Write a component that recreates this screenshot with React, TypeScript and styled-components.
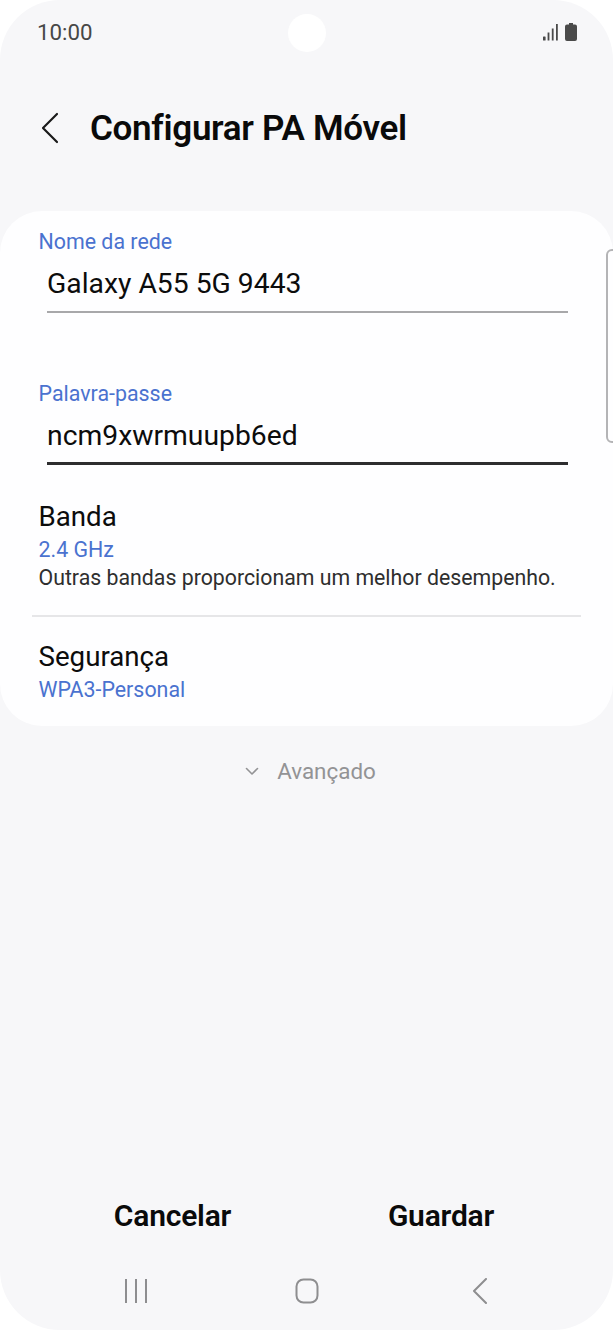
import React from "react";
import styled, { createGlobalStyle } from "styled-components";

const Global = createGlobalStyle`
  html, body { margin: 0; padding: 0; background: #fff; }
  * { box-sizing: border-box; }
  body { font-family: Roboto, Inter, "Liberation Sans", sans-serif; }
`;

const Phone = styled.div`
  position: relative;
  width: 613px;
  height: 1330px;
  background: #f7f7f9;
  border-radius: 60px;
  overflow: hidden;
  display: flex;
  flex-direction: column;
`;

const StatusBar = styled.div`
  height: 64px;
  padding: 0 36px 0 37px;
  display: flex;
  align-items: center;
  justify-content: space-between;
`;

const Time = styled.span`
  font-size: 22.3px;
  color: #474747;
`;

const Punch = styled.div`
  position: absolute;
  left: 288px;
  top: 14px;
  width: 38px;
  height: 38px;
  border-radius: 50%;
  background: #fff;
`;

const StatusIcons = styled.div`
  display: flex;
  align-items: center;
  gap: 6px;
`;

const Header = styled.header`
  height: 128px;
  padding-left: 40px;
  display: flex;
  align-items: center;
  gap: 28px;
`;

const Title = styled.h1`
  margin: 0;
  font-size: 35px;
  font-weight: 600;
  letter-spacing: -0.3px;
  color: #0a0a0a;
`;

const Card = styled.section`
  margin-top: 19px;
  height: 515px;
  background: #fefeff;
  border-radius: 42px;
  padding: 18px 32px 0;
  display: flex;
  flex-direction: column;
`;

const Field = styled.div<{ $height: number }>`
  height: ${(p) => p.$height}px;
  display: flex;
  flex-direction: column;
`;

const FieldLabel = styled.label`
  padding-left: 6.5px;
  font-size: 21.4px;
  line-height: 26px;
  color: #4a72cf;
`;

const FieldValue = styled.div<{ $active?: boolean }>`
  margin: 0 13px 0 15px;
  height: 58px;
  padding-top: 12px;
  font-size: 28.3px;
  line-height: 33px;
  color: #0c0c0c;
  border-bottom: ${(p) => (p.$active ? "3px solid #2d2d2f" : "2px solid #a8a8aa")};
`;

const Row = styled.div<{ $divider?: boolean; $height: number; $top: number }>`
  height: ${(p) => p.$height}px;
  padding: ${(p) => p.$top}px 6.5px 0;
  border-bottom: ${(p) => (p.$divider ? "2px solid #e6e6e8" : "none")};
`;

const RowTitle = styled.div`
  font-size: 27.7px;
  line-height: 34px;
  color: #0c0c0c;
`;

const RowValue = styled.div`
  margin-top: 2px;
  font-size: 21.4px;
  line-height: 28px;
  color: #4a72cf;
`;

const RowHint = styled.div`
  font-size: 21.3px;
  line-height: 28px;
  color: #2e2e2e;
  white-space: nowrap;
`;

const Advanced = styled.div`
  height: 90px;
  display: flex;
  align-items: center;
  justify-content: center;
  gap: 18px;
  padding-left: 8px;
  font-size: 22.4px;
  color: #939395;
`;

const Spacer = styled.div`
  flex: 1;
`;

const Actions = styled.div`
  height: 76px;
  padding-bottom: 2px;
  display: grid;
  grid-template-columns: 345px 192px;
`;

const ActionButton = styled.button`
  border: 0;
  background: none;
  padding: 0;
  font-family: Roboto, Inter, sans-serif;
  font-size: 30px;
  font-weight: 600;
  letter-spacing: -0.2px;
  color: #0a0a0a;
`;

const NavBar = styled.nav`
  height: 76px;
  padding: 0 0 2px 123px;
  display: grid;
  grid-template-columns: 26px 24px 30px;
  column-gap: 146px;
  align-items: center;
`;

const ScrollHandle = styled.div`
  position: absolute;
  left: 606px;
  top: 249px;
  width: 12px;
  height: 194px;
  border: 2px solid #b4b4b6;
  border-radius: 8px;
`;

export default function App() {
  return (
    <>
      <Global />
      <Phone>
        <StatusBar>
          <Time>10:00</Time>
          <StatusIcons>
            <svg width="16" height="17" viewBox="0 0 16 17" fill="#4a4a4a">
              <rect x="0" y="12.5" width="2.6" height="4" rx=".6" />
              <rect x="4.6" y="8.5" width="1.8" height="8" />
              <rect x="8.8" y="4.5" width="1.8" height="12" />
              <rect x="13" y="0" width="1.8" height="16.5" />
            </svg>
            <svg width="12" height="18" viewBox="0 0 12 18" fill="#4a4a4a">
              <path d="M4 0h4v1.5h2A2 2 0 0 1 12 3.5V16a2 2 0 0 1-2 2H2a2 2 0 0 1-2-2V3.5a2 2 0 0 1 2-2h2z" />
            </svg>
          </StatusIcons>
        </StatusBar>
        <Punch />
        <Header>
          <svg width="22" height="32" viewBox="0 0 22 32" fill="none" stroke="#1a1a1a" strokeWidth="2.2" strokeLinecap="round" strokeLinejoin="round">
            <path d="M17 2 3 16l14 14" />
          </svg>
          <Title>Configurar PA Móvel</Title>
        </Header>
        <Card>
          <Field $height={152}>
            <FieldLabel>Nome da rede</FieldLabel>
            <FieldValue>Galaxy A55 5G 9443</FieldValue>
          </Field>
          <Field $height={108}>
            <FieldLabel>Palavra-passe</FieldLabel>
            <FieldValue $active>ncm9xwrmuupb6ed</FieldValue>
          </Field>
          <Row $divider $height={128} $top={11}>
            <RowTitle>Banda</RowTitle>
            <RowValue>2.4 GHz</RowValue>
            <RowHint>Outras bandas proporcionam um melhor desempenho.</RowHint>
          </Row>
          <Row $height={100} $top={23}>
            <RowTitle>Segurança</RowTitle>
            <RowValue>WPA3-Personal</RowValue>
          </Row>
        </Card>
        <Advanced>
          <svg width="14" height="9" viewBox="0 0 14 9" fill="none" stroke="#939395" strokeWidth="1.6" strokeLinecap="round" strokeLinejoin="round">
            <path d="M1.5 1.5 7 7l5.5-5.5" />
          </svg>
          <span>Avançado</span>
        </Advanced>
        <Spacer />
        <Actions>
          <ActionButton>Cancelar</ActionButton>
          <ActionButton>Guardar</ActionButton>
        </Actions>
        <NavBar>
          <svg width="26" height="26" viewBox="0 0 26 26" stroke="#8e8e90" strokeWidth="2" fill="none">
            <path d="M3 1v24M13 1v24M23 1v24" />
          </svg>
          <svg width="24" height="26" viewBox="0 0 24 26" stroke="#8e8e90" strokeWidth="2" fill="none">
            <rect x="1.5" y="1.5" width="21" height="23" rx="7" />
          </svg>
          <svg width="30" height="26" viewBox="0 0 30 26" stroke="#8e8e90" strokeWidth="2" fill="none" strokeLinecap="round" strokeLinejoin="round">
            <path d="M21 1 9 13l12 12" />
          </svg>
        </NavBar>
        <ScrollHandle />
      </Phone>
    </>
  );
}
